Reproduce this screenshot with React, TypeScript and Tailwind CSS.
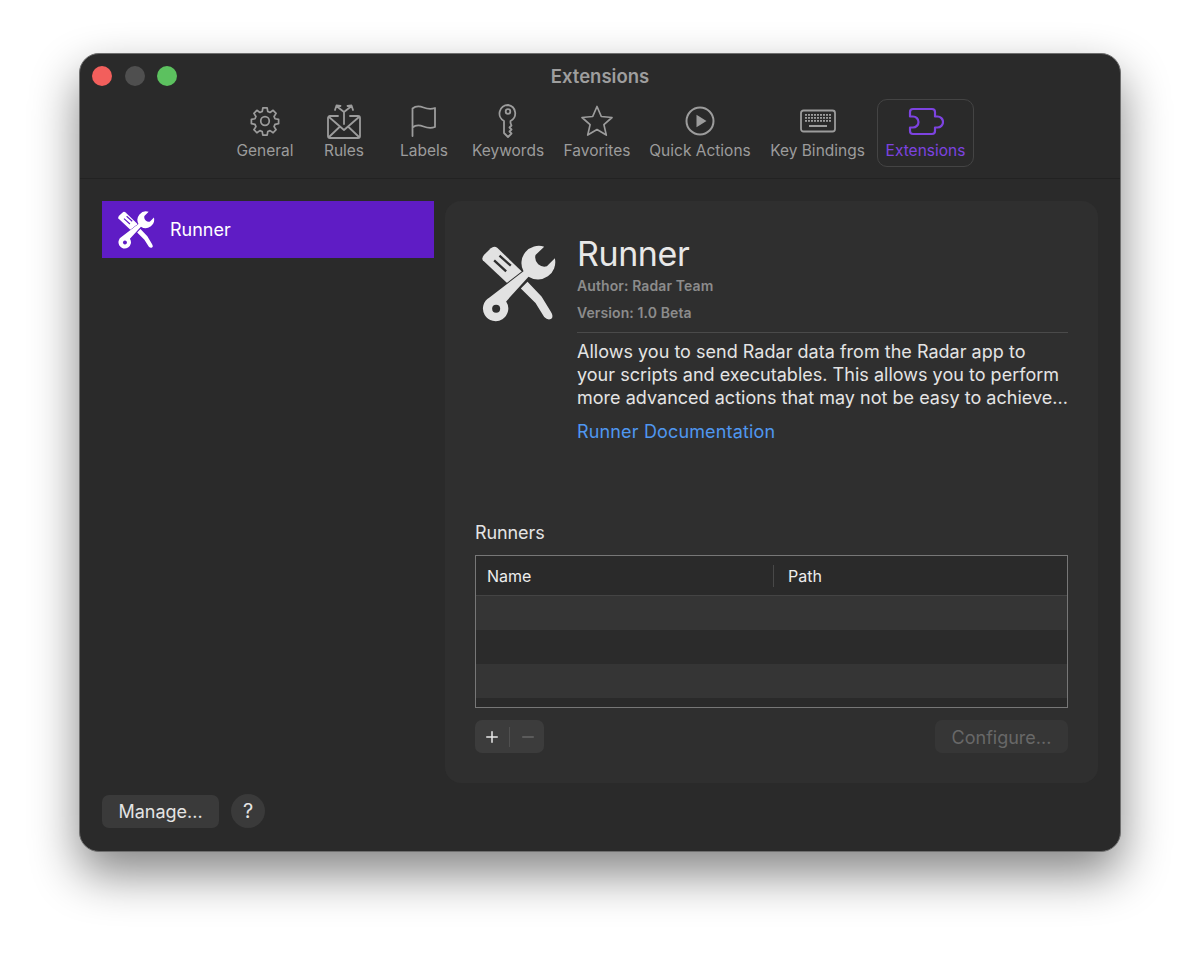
import type { ReactNode } from "react";
import { Minus, Plus } from "lucide-react";

function GearIcon() {
  return (
    <svg width="32" height="32" viewBox="0 0 24 24" fill="none" stroke="currentColor" strokeWidth="1.300" strokeLinejoin="round">
      <path d="M10.400 2.200h3.200l.5 2.700 1.700.7 2.300-1.600 2.200 2.300-1.500 2.300.7 1.700 2.700.5v3.200l-2.700.5-.7 1.700 1.500 2.300-2.200 2.300-2.300-1.600-1.700.7-.5 2.700h-3.200l-.5-2.700-1.700-.7-2.300 1.600-2.200-2.300 1.500-2.300-.7-1.700-2.700-.5v-3.200l2.700-.5.7-1.700-1.500-2.300 2.200-2.300 2.300 1.600 1.700-.7z" />
      <circle cx="12" cy="12" r="3.200" />
    </svg>
  );
}

function RulesIcon() {
  return (
    <svg width="36" height="36" viewBox="0 0 36 36" fill="none" stroke="currentColor" strokeWidth="1.800" strokeLinejoin="round" strokeLinecap="round">
      <path d="M12 13H4a2 2 0 0 0-2 2V33a2 2 0 0 0 2 2h28a2 2 0 0 0 2-2V15a2 2 0 0 0-2-2h-8" />
      <path d="M3 14 18 27 33 14M3 34 14 23.500M33 34 22 23.500" />
      <path d="M18 21V9L11 3.500M18 9l7-5.500M9 7l1.500-4.500 4 .5M27 7l-1.500-4.500-4 .5" />
    </svg>
  );
}

function FlagIcon() {
  return (
    <svg width="32" height="36" viewBox="0 0 32 36" fill="none" stroke="currentColor" strokeWidth="1.800" strokeLinejoin="round" strokeLinecap="round">
      <path d="M4.500 33V5.500c3-2.500 7-2.500 11-1 4 1.500 7.500 2 11.500 .5v19c-4 1.500-7.500 1-11.500-.5-4-1.500-8-1.500-11 1" />
    </svg>
  );
}

function KeyIcon() {
  return (
    <svg width="24" height="36" viewBox="0 0 24 36" fill="none" stroke="currentColor" strokeWidth="1.800" strokeLinejoin="round" strokeLinecap="round">
      <path d="M12 2a8.500 8.500 0 0 0-4 16v12l4 4 3.500-3.500-2-2 2-2-2-2 2-2-1-2.500v-2a8.500 8.500 0 0 0-2.500-16z" />
      <circle cx="12" cy="8.500" r="2.300" />
    </svg>
  );
}

function StarIcon() {
  return (
    <svg width="34" height="34" viewBox="0 0 34 34" fill="none" stroke="currentColor" strokeWidth="1.700" strokeLinejoin="round">
      <path d="m17 2.500 4.300 10 10.700 1-8.100 7.100 2.400 10.500L17 25.500 7.700 31.100l2.400-10.500L2 13.500l10.700-1z" />
    </svg>
  );
}

function PlayIcon() {
  return (
    <svg width="32" height="32" viewBox="0 0 32 32" fill="none">
      <circle cx="16" cy="16" r="13.500" stroke="currentColor" strokeWidth="2" />
      <path d="M12.500 9.800v12.400L22.500 16z" fill="currentColor" />
    </svg>
  );
}

function KeyboardIcon() {
  const rows = [5, 8, 11];
  const cols = [5, 8, 11, 14, 17, 20, 23, 26, 29];
  return (
    <svg width="36" height="24" viewBox="0 0 36 24" fill="none">
      <rect x="1" y="1.500" width="34" height="21" rx="2.500" stroke="currentColor" strokeWidth="1.800" />
      {rows.map((y) =>
        cols.map((x) => <rect key={`${x}-${y}`} x={x} y={y} width="2" height="1.800" fill="currentColor" />),
      )}
      <rect x="9" y="16" width="18" height="2" fill="currentColor" />
    </svg>
  );
}

function PuzzleIcon() {
  return (
    <svg width="36" height="30" viewBox="0 0 36 30" fill="none" stroke="currentColor" strokeWidth="2.200" strokeLinejoin="round" strokeLinecap="round">
      <path d="M2 6a3 3 0 0 1 3-3h19a3 3 0 0 1 3 3v4.500h2.500a5.500 5.500 0 0 1 0 11H27V25a3 3 0 0 1-3 3H5a3 3 0 0 1-3-3v-3.500h3a5.500 5.500 0 0 0 0-11H2z" />
    </svg>
  );
}

// crossed screwdriver and wrench, used big in the panel and small in the sidebar
function ToolsIcon({ size, cut }: { size: number; cut: string }) {
  return (
    <svg width={size} height={size * 1.04} viewBox="30 40 230 240" fill="none">
      <path d="M38 92Q34 84 42 75L62 56Q72 47 82 55L170 140 132 180Z" fill="currentColor" />
      <path d="M72 92 108 125M88 78 122 108" stroke={cut} strokeWidth="7" />
      <path d="M152 176 172 156 214 200 242 246Q252 262 242 268 232 272 222 262L196 220Z" fill="currentColor" />
      <path
        d="M222 51 196 76Q192 92 204 104 216 114 230 110L254 86A52 52 0 0 1 175 141L108 215A38 38 0 1 1 58 203L160 125A52 52 0 0 1 222 51Z"
        fill="currentColor"
        stroke={cut}
        strokeWidth="6"
        paintOrder="stroke"
      />
      <circle cx="78" cy="237" r="12" fill={cut} />
    </svg>
  );
}

const NAV_ITEMS: { label: string; width: string; icon: ReactNode }[] = [
  { label: "General", width: "w-[78px]", icon: <GearIcon /> },
  { label: "Rules", width: "w-[80px]", icon: <RulesIcon /> },
  { label: "Labels", width: "w-[80px]", icon: <FlagIcon /> },
  { label: "Keywords", width: "w-[88px]", icon: <KeyIcon /> },
  { label: "Favorites", width: "w-[90px]", icon: <StarIcon /> },
  { label: "Quick Actions", width: "w-[116px]", icon: <PlayIcon /> },
  { label: "Key Bindings", width: "w-[119px]", icon: <KeyboardIcon /> },
];

function NavItem({ label, width, icon }: { label: string; width: string; icon: ReactNode }) {
  return (
    <div className={`flex flex-col items-center text-[#9c9c9c] ${width}`}>
      <div className="flex h-[40px] items-center justify-center">{icon}</div>
      <span className="whitespace-nowrap text-[15.5px] leading-[20px]">{label}</span>
    </div>
  );
}

function Toolbar() {
  return (
    <header className="relative h-[125px] border-b border-[#222222]">
      <div className="absolute left-[12px] top-[12px] flex gap-[12.500px]">
        <span className="h-[20px] w-[20px] rounded-full bg-[#f25f5c]" />
        <span className="h-[20px] w-[20px] rounded-full bg-[#4f4f4f]" />
        <span className="h-[20px] w-[20px] rounded-full bg-[#5cc15f]" />
      </div>
      <h1 className="pt-[11px] text-center text-[18.500px] font-semibold leading-[22px] text-[#9e9e9e]">Extensions</h1>
      <nav className="mt-[12px] flex justify-center">
        <div className="flex pt-[2px]">
          {NAV_ITEMS.map((item) => (
            <NavItem key={item.label} {...item} />
          ))}
        </div>
        <div className="flex h-[68px] w-[97px] flex-col items-center rounded-[10px] border border-[#444444] pt-[1px] text-[#7d43e0]">
          <div className="flex h-[40px] items-center justify-center">
            <PuzzleIcon />
          </div>
          <span className="whitespace-nowrap text-[15.5px] leading-[20px]">Extensions</span>
        </div>
      </nav>
    </header>
  );
}

function Sidebar() {
  return (
    <aside className="flex h-[627px] w-[332px] flex-col justify-between">
      <div className="flex h-[57px] items-center gap-[15px] bg-[#5f1cc5] pl-[15px] text-white">
        <ToolsIcon size={38} cut="#5f1cc5" />
        <span className="text-[18px]">Runner</span>
      </div>
      <div className="flex items-center gap-[12px]">
        <button className="h-[33px] w-[117px] rounded-[7px] bg-[#3a3a3a] pt-[1px] text-[18px] text-[#e4e4e4]">Manage...</button>
        <button className="h-[34px] w-[34px] rounded-full bg-[#3a3a3a] text-[20px] text-[#e4e4e4]">?</button>
      </div>
    </aside>
  );
}

function RunnersTable() {
  return (
    <div className="h-[153px] border border-[#777777] bg-[#2a2a2a]">
      <div className="flex h-[40px] items-center border-b border-[#444444] text-[16px] text-[#ededed]">
        <div className="flex h-[22px] w-[298px] items-center border-r border-[#484848] pl-[11px]">Name</div>
        <div className="pl-[14px]">Path</div>
      </div>
      <div className="h-[34px] bg-[#353535]" />
      <div className="h-[34px] bg-[#2b2b2b]" />
      <div className="h-[34px] bg-[#353535]" />
    </div>
  );
}

function DetailPanel() {
  return (
    <section className="flex h-[582px] w-[653px] flex-col rounded-[16px] bg-[#2f2f2f] pl-[30px] pr-[30px]">
      <div className="flex pt-[36px]">
        <div className="w-[102px] pl-[5px] pt-[6px] text-[#e2e2e2]">
          <ToolsIcon size={77} cut="#2f2f2f" />
        </div>
        <div className="flex-1">
          <h2 className="text-[34px] leading-[34px] tracking-[-0.4px] text-[#e8e8e8]">Runner</h2>
          <p className="mt-[5px] text-[14px] font-semibold leading-[20px] tracking-[0.1px] text-[#8c8c8c]">Author: Radar Team</p>
          <p className="mt-[7px] text-[14px] font-semibold leading-[20px] tracking-[0.1px] text-[#8c8c8c]">Version: 1.0 Beta</p>
          <div className="mt-[9px] border-t border-[#4a4a4a]" />
          <p className="mt-[7px] whitespace-nowrap text-[18px] leading-[23px] tracking-[0.02px] text-[#e4e4e4]">
            Allows you to send Radar data from the Radar app to
            <br />
            your scripts and executables. This allows you to perform
            <br />
            more advanced actions that may not be easy to achieve...
          </p>
          <a className="mt-[11px] block text-[18px] leading-[24px] tracking-[0.15px] text-[#4f97f0]">Runner Documentation</a>
        </div>
      </div>
      <h3 className="mt-[77px] text-[18px] leading-[24px] tracking-[-0.1px] text-[#e4e4e4]">Runners</h3>
      <div className="mt-[10px]">
        <RunnersTable />
      </div>
      <div className="mt-[12px] flex items-center justify-between">
        <div className="flex h-[33px] w-[69px] items-center rounded-[7px] bg-[#3c3c3c] pl-[8px]">
          <Plus size={18} className="text-[#e8e8e8]" />
          <span className="ml-[8px] h-[20px] border-l border-[#505050]" />
          <Minus size={18} className="ml-[9px] text-[#666666]" />
        </div>
        <button className="h-[33px] w-[133px] rounded-[7px] bg-[#363636] pt-[1px] text-[18px] text-[#686868]">Configure...</button>
      </div>
    </section>
  );
}

export default function App() {
  return (
    <div className="h-[956px] w-[1200px] overflow-hidden bg-white pl-[79px] pt-[53px] font-['Inter',sans-serif]">
      <div className="h-[799px] w-[1042px] overflow-hidden rounded-[20px] border border-[#6e6e6e] bg-[#2a2a2a] shadow-[0_22px_48px_rgba(0,0,0,0.48)]">
        <Toolbar />
        <main className="flex gap-[11px] px-[22px] pt-[22px]">
          <Sidebar />
          <DetailPanel />
        </main>
      </div>
    </div>
  );
}
